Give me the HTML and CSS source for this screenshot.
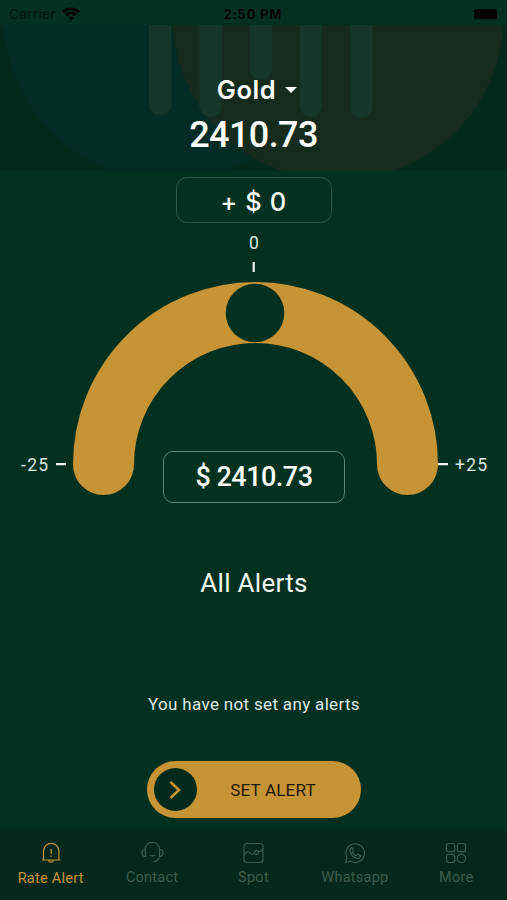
FILE: index.html
```
<!DOCTYPE html>
<html lang="en">
<head>
<meta charset="UTF-8">
<meta name="viewport" content="width=device-width, initial-scale=1.0">
<title>Rate Alert</title>
<link rel="stylesheet" href="styles.css">
</head>
<body>

<div class="status-bar">
  <div class="carrier">
    <span>Carrier</span>
    <svg width="18" height="14" viewBox="0 0 18 14" fill="none" stroke="#000" stroke-width="2.6">
      <path d="M1.2 5.1a11 11 0 0 1 15.6 0"/>
      <path d="M4.1 8.2a6.9 6.9 0 0 1 9.8 0"/>
      <path d="M9 13.6 6.3 10.8a3.8 3.8 0 0 1 5.4 0z" fill="#000" stroke="none"/>
    </svg>
  </div>
  <div class="time">2:50 PM</div>
  <div class="battery"><span></span></div>
</div>

<div class="header">
  <svg class="header-art" width="507" height="146" viewBox="0 25 507 146">
    <circle cx="169" cy="15" r="166" fill="#022c24"/>
    <circle cx="338" cy="15" r="166" fill="#142b1e"/>
    <g fill="#153628">
      <rect x="149" y="0" width="22.5" height="115" rx="11"/>
      <rect x="199.5" y="0" width="22.5" height="117" rx="11"/>
      <rect x="250" y="0" width="22" height="80" rx="11"/>
      <rect x="300" y="0" width="22" height="117" rx="11"/>
      <rect x="350" y="0" width="22.5" height="118" rx="11"/>
    </g>
  </svg>
  <div class="metal">Gold <i class="caret"></i></div>
  <div class="rate">2410.73</div>
</div>

<div class="main">
  <div class="change">+ $ 0</div>

  <div class="gauge">
    <svg width="507" height="280" viewBox="0 230 507 280">
      <path d="M103.5 464.5a152 152 0 0 1 304 0" fill="none" stroke="#c69335" stroke-width="61" stroke-linecap="round"/>
      <circle cx="255" cy="313" r="29.3" fill="#033120"/>
      <path d="M253.7 262v10M56 464.2h10M438 464.2h10" stroke="#eef5f0" stroke-width="2.2"/>
      <g class="scale">
        <text x="254.5" y="249" text-anchor="middle">0</text>
        <text x="21" y="471">-25</text>
        <text x="455" y="471">+25</text>
      </g>
    </svg>
    <div class="target">$ 2410.73</div>
  </div>

  <h2 class="alerts-title">All Alerts</h2>
  <p class="empty">You have not set any alerts</p>

  <button class="set-alert">
    <span class="knob">
      <svg width="12" height="18" viewBox="0 0 12 18" fill="none" stroke="#c69335" stroke-width="2.6">
        <path d="M1.5 1 10 9 1.5 17"/>
      </svg>
    </span>
    <span class="set-label">SET ALERT</span>
  </button>
</div>

<div class="tab-bar">
  <div class="tab active">
    <svg width="24" height="24" viewBox="0 0 24 24">
      <path d="M4.5 19V10a7.7 7.7 0 0 1 15.4 0v9zM3 19h18.4M9.5 19.3a2.6 2.6 0 0 0 5 0M12.2 8v5M12.2 14.5v1.5"/>
    </svg>
    <span>Rate Alert</span>
  </div>
  <div class="tab">
    <svg width="24" height="24" viewBox="0 0 24 24">
      <path d="M5 8.5a7.2 7.2 0 0 1 14.5 0M5.500 8.500v7a3.500 3.500 0 0 1 0-7zM19.500 8.500v7a3.500 3.500 0 0 0 0-7zM19.500 15.500c-.8 3.200-3 5-6.200 5.500M10 14.200c1.500.7 3.500.7 5 0"/>
    </svg>
    <span>Contact</span>
  </div>
  <div class="tab">
    <svg width="24" height="24" viewBox="0 0 24 24">
      <rect x="3" y="2.5" width="19" height="19" rx="3"/>
      <path d="M3 14.5c2-4 4.500-4.500 6.500-2.200 1.500 1.500 3 1 4-.3M17.500 10.300h2.500q1.500 0 1.500-3"/>
      <circle cx="15.5" cy="11.3" r="2"/>
    </svg>
    <span>Spot</span>
  </div>
  <div class="tab">
    <svg width="24" height="24" viewBox="0 0 24 24">
      <path d="M2.7 21.5 4 16.600A9.300 9.300 0 1 1 7.500 20.200z"/>
      <path d="M8.5 6.8c-1.600 1-2 2.800-1 5 1.300 2.900 3.500 4.900 6.300 5.600 1.900.5 3.700-.9 3.600-2.700l-2.700-1.500-1.500 1.500c-1.700-.7-3-2-3.800-3.800l1.100-1.400-1.200-2.700z"/>
    </svg>
    <span>Whatsapp</span>
  </div>
  <div class="tab">
    <svg width="24" height="24" viewBox="0 0 24 24">
      <rect x="2.5" y="2.5" width="8.2" height="8.2" rx="2"/>
      <rect x="13.3" y="2.5" width="8.2" height="8.2" rx="2"/>
      <rect x="2.5" y="13.3" width="8.2" height="8.2" rx="2"/>
      <circle cx="17.4" cy="17.4" r="4.2"/>
    </svg>
    <span>More</span>
  </div>
</div>

</body>
</html>
```
FILE: styles.css
```
body {
  margin: 0;
  width: 507px;
  height: 900px;
  display: flex;
  flex-direction: column;
  overflow: hidden;
  background-color: #033120;
  color: #fff;
  font-family: Roboto, sans-serif;
}
.status-bar {
  height: 25px;
  display: grid;
  grid-template-columns: 1fr auto 1fr;
  align-items: center;
  padding: 2px 10px 0 9px;
  box-sizing: border-box;
  color: #000;
  font-family: Inter, sans-serif;
  font-size: 13.5px;
}
.carrier {
  display: flex;
  align-items: center;
  gap: 6px;
  color: #02150d;
  letter-spacing: 0.35px;
}
.time {
  font-weight: 600;
  font-size: 13px;
  letter-spacing: 0.9px;
}
.battery {
  justify-self: end;
  display: flex;
}
.battery span {
  width: 23px;
  height: 10px;
  border-radius: 2px;
  background-color: #000;
}
.header {
  position: relative;
  height: 146px;
  display: flex;
  flex-direction: column;
  align-items: center;
  background-color: #042a1c;
}
.header-art {
  position: absolute;
  top: 0;
  left: 0;
}
.metal {
  position: relative;
  display: flex;
  align-items: center;
  gap: 9px;
  margin: 49px 0 0 7px;
  font-family: Inter, sans-serif;
  font-size: 25.5px;
  line-height: 32px;
  font-weight: 600;
  letter-spacing: 0.6px;
}
.caret {
  border: 6px solid transparent;
  border-top-color: #fff;
  border-bottom: 0;
}
.rate {
  position: relative;
  font-size: 36px;
  line-height: 44px;
  font-weight: 500;
  letter-spacing: -0.6px;
  margin-top: 7px;
}
.main {
  flex: 1;
  display: flex;
  flex-direction: column;
  align-items: center;
}
.change {
  width: 156px;
  height: 46px;
  margin-top: 6px;
  box-sizing: border-box;
  border: 1px solid #2d5645;
  border-radius: 11px;
  text-align: center;
  font-family: Inter, sans-serif;
  font-size: 25.5px;
  line-height: 47px;
  font-weight: 500;
  letter-spacing: 0.6px;
}
.gauge {
  position: relative;
  height: 280px;
  margin-top: 7px;
}
.gauge svg {
  display: block;
}
.scale {
  fill: #dce9e2;
  font-size: 17.5px;
  letter-spacing: 1.3px;
}
.target {
  position: absolute;
  left: 163px;
  top: 221px;
  width: 182px;
  height: 52px;
  box-sizing: border-box;
  border: 1px solid #5c8572;
  border-radius: 10px;
  text-align: center;
  font-size: 27px;
  line-height: 50px;
  font-weight: 500;
  letter-spacing: -0.5px;
}
.alerts-title {
  margin: 57px 0 0 1px;
  font-size: 26px;
  line-height: 32px;
  font-weight: 400;
  letter-spacing: 0.3px;
  color: #f0f6f2;
}
.empty {
  margin: 93px 0 0 1px;
  font-size: 17px;
  line-height: 24px;
  letter-spacing: 0.33px;
  color: #dfe9e3;
}
.set-alert {
  width: 214px;
  height: 57px;
  margin-top: 45px;
  padding: 0 11px 0 7px;
  border: 0;
  border-radius: 29px;
  display: flex;
  align-items: center;
  background-color: #c69335;
  color: #1f1908;
  font-family: Roboto, sans-serif;
  font-size: 17px;
  letter-spacing: 0.2px;
}
.knob {
  width: 43px;
  height: 43px;
  border-radius: 50%;
  display: flex;
  align-items: center;
  justify-content: center;
  background-color: #042a1c;
}
.set-label {
  flex: 1;
  text-align: center;
}
.tab-bar {
  height: 68px;
  display: grid;
  grid-template-columns: repeat(5, 1fr);
  background-color: #04281b;
  box-shadow: 0 -1px 4px #04281b;
}
.tab {
  display: flex;
  flex-direction: column;
  align-items: center;
  padding-top: 9px;
  color: #405c4e;
  font-size: 14.5px;
  line-height: 20px;
  letter-spacing: 0.25px;
}
.tab svg {
  fill: none;
  stroke: currentColor;
  stroke-width: 1.2;
  margin-bottom: 3px;
}
.tab.active {
  color: #c69335;
}
.tab.active span {
  padding-top: 1px;
}
```
